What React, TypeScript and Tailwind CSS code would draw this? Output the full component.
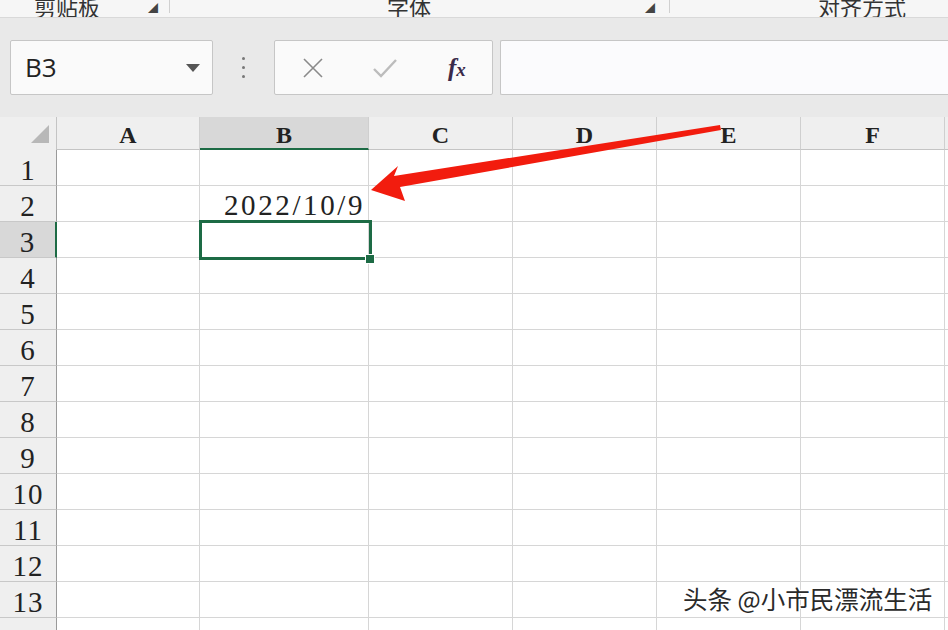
import React from "react";

const cols = ["A", "B", "C", "D", "E", "F"];
const colW = [143, 169, 144, 144, 144, 144];
const serif = '"Liberation Serif", "Times New Roman", serif';

function HeaderRow() {
  return (
    <div className="flex h-[33px] bg-[#efefef]">
      <div className="w-[57px] shrink-0 border-r border-[#c4c4c4] relative flex items-end justify-end pr-[7px] pb-[7px]">
        <svg width="18" height="18" viewBox="0 0 18 18">
          <polygon points="18,0 18,18 0,18" fill="#b8b8b8" />
        </svg>
      </div>
      {cols.map((c, i) => (
        <div
          key={c}
          style={{ width: colW[i] }}
          className={
            "shrink-0 border-r border-[#cfcfcf] flex items-center justify-center text-[24px] leading-none " +
            (c === "B" ? "bg-[#d8d8d8] border-b-[2px] border-b-[#1d6b45]" : "border-b border-b-[#c4c4c4]")
          }
        >
          <span className="pt-[4px] font-semibold" style={{ fontFamily: serif, color: "#222" }}>
            {c}
          </span>
        </div>
      ))}
      <div className="flex-1 border-b border-b-[#c4c4c4]" />
    </div>
  );
}

function Row({ n }: { n: number }) {
  const sel = n === 3;
  return (
    <div className="flex h-[36px]">
      <div
        className={
          "w-[57px] shrink-0 flex items-center justify-center text-[29px] leading-none border-b border-[#c8c8c8] " +
          (sel ? "bg-[#d8d8d8] border-r-[2px] border-r-[#1d6b45]" : "bg-[#efefef] border-r border-r-[#9a9a9a]")
        }
        style={{ fontFamily: serif, color: "#222" }}
      >
        {n < 14 ? <span className="pt-[5px] tracking-[1px]">{n}</span> : null}
      </div>
      {cols.map((c, i) => (
        <div
          key={c}
          style={{ width: colW[i] }}
          className="shrink-0 bg-white border-r border-b border-[#d6d6d6] flex items-end justify-end pr-[5px] pb-[1px]"
        >
          {n === 2 && c === "B" ? (
            <span
              className="text-[29px] leading-none tracking-[2.6px] -mr-[2px]"
              style={{ fontFamily: serif, color: "#222" }}
            >
              2022/10/9
            </span>
          ) : null}
        </div>
      ))}
      <div className="flex-1 bg-white border-b border-[#d6d6d6]" />
    </div>
  );
}

export default function App() {
  return (
    <div className="w-[948px] h-[630px] overflow-hidden bg-white relative" style={{ fontFamily: '"Noto Sans CJK SC", "Noto Sans", sans-serif' }}>
      {/* ribbon strip */}
      <div className="h-[18px] bg-[#f6f6f6] border-b border-[#d9d9d9] flex items-start overflow-hidden text-[#333] text-[22px] leading-none relative">
        <div className="w-[170px] h-[13px] flex items-end border-r border-[#d0d0d0] relative">
          <span className="ml-[34px] -mb-[4px]">剪贴板</span>
          <span className="absolute left-[148px] bottom-[0px] text-[10px] text-[#444]">◢</span>
        </div>
        <div className="w-[500px] h-[13px] flex items-end border-r border-[#d0d0d0] relative">
          <span className="ml-[217px] -mb-[4px]">字体</span>
          <span className="absolute right-[14px] bottom-[0px] text-[10px] text-[#444]">◢</span>
        </div>
        <div className="flex-1 h-[13px] flex items-end">
          <span className="ml-[148px] -mb-[4px]">对齐方式</span>
        </div>
      </div>
      {/* formula band */}
      <div className="h-[99px] bg-[#e9e9e9] flex items-center pl-[10px]">
        <div className="w-[203px] h-[55px] bg-[#fafafa] border border-[#c6c6c6] rounded-[2px] flex items-center justify-between pl-[14px] pr-[12px]">
          <span className="text-[26px] text-[#222]" style={{ fontFamily: '"Open Sans", "Noto Sans", sans-serif' }}>B3</span>
          <svg width="14" height="8" viewBox="0 0 14 8"><polygon points="0,0 14,0 7,8" fill="#555" /></svg>
        </div>
        <div className="w-[61px] flex flex-col items-center gap-[6px]">
          <span className="w-[3px] h-[3px] rounded-full bg-[#777]" />
          <span className="w-[3px] h-[3px] rounded-full bg-[#777]" />
          <span className="w-[3px] h-[3px] rounded-full bg-[#777]" />
        </div>
        <div className="w-[219px] h-[55px] bg-[#fafafa] border border-[#c6c6c6] rounded-[2px] flex items-center">
          <svg className="ml-[27px]" width="22" height="22" viewBox="0 0 22 22">
            <path d="M2 2 L20 20 M20 2 L2 20" stroke="#8a8a8a" strokeWidth="1.6" />
          </svg>
          <svg className="ml-[48px]" width="26" height="22" viewBox="0 0 26 22">
            <path d="M2 12 L9 19 L24 3" stroke="#bcbcbc" strokeWidth="2.4" fill="none" />
          </svg>
          <span
            className="ml-[50px] text-[25px] italic font-bold text-[#3a2a4a] leading-none"
            style={{ fontFamily: serif }}
          >
            f<span className="text-[19px]">x</span>
          </span>
        </div>
        <div className="ml-[7px] flex-1 h-[55px] bg-[#fbfbfd] border border-[#c6c6c6] rounded-l-[2px] border-r-0" />
      </div>
      {/* sheet */}
      <div className="relative">
        <HeaderRow />
        {Array.from({ length: 14 }, (_, i) => (
          <Row key={i} n={i + 1} />
        ))}
        {/* selection */}
        <div className="absolute left-[199px] top-[103px] w-[173px] h-[40px] border-[3px] border-[#1d6b45] pointer-events-none" />
        <div className="absolute left-[365px] top-[137px] w-[10px] h-[10px] bg-[#1d6b45] border border-white" />
      </div>
      {/* arrow */}
      <svg className="absolute left-0 top-0" width="948" height="630" viewBox="0 0 948 630">
        <polygon
          points="720,125 721,130 400,187 405,201 371,190 398,166 394,176"
          fill="#f21c0e"
        />
      </svg>
      {/* watermark */}
      <div
        className="absolute left-[683px] top-[587px] text-[24.5px] text-[#2a2a2a] leading-none"
        style={{ textShadow: "1px 1px 0 #fff, -1px -1px 0 #fff, 1px -1px 0 #fff, -1px 1px 0 #fff" }}
      >
        头条 @小市民漂流生活
      </div>
    </div>
  );
}
